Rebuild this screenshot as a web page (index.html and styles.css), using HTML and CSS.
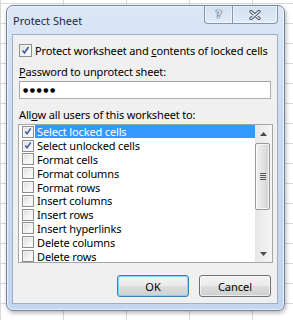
FILE: index.html
```html
<!DOCTYPE html>
<html lang="en">
<head>
  <meta charset="UTF-8">
  <meta name="viewport" content="width=device-width, initial-scale=1">
  <title>Protect Sheet</title>

  <link rel="stylesheet" href="styles.css">
</head>

<body>

  <div class="dialog">
    <div class="titlebar">
      <span class="title">Protect Sheet</span>
      <div class="caption-btns">
        <span class="cap-btn help">?</span>
        <span class="cap-btn close">
          <svg width="12" height="10" viewBox="0 0 12 10">
            <path d="M2 1.5 L10 8.5 M10 1.5 L2 8.5" stroke="#3d4b60" stroke-width="3.2" stroke-linecap="round"/>
            <path d="M2 1.5 L10 8.5 M10 1.5 L2 8.5" stroke="#f4f6f9" stroke-width="1.4" stroke-linecap="round"/>
          </svg>
        </span>
      </div>
    </div>

    <div class="panel">
      <div class="check-row">
        <span class="cb"><svg width="11" height="11" viewBox="0 0 11 11"><path d="M2.5 5.5 L4.5 8 L8.5 2" fill="none" stroke="#3a5a9c" stroke-width="1.6"/></svg></span>
        <span>Protect worksheet and <u>c</u>ontents of locked cells</span>
      </div>

      <div class="field-label"><u>P</u>assword to unprotect sheet:</div>
      <div class="password">●●●●●</div>

      <div class="field-label">All<u>o</u>w all users of this worksheet to:</div>

      <div class="listbox">
        <ul class="items">
          <li class="item">
            <span class="cb"><svg width="11" height="11" viewBox="0 0 11 11"><path d="M2.5 5.5 L4.5 8 L8.5 2" fill="none" stroke="#3a5a9c" stroke-width="1.6"/></svg></span>
            <span class="item-text selected">Select locked cells</span>
          </li>
          <li class="item">
            <span class="cb"><svg width="11" height="11" viewBox="0 0 11 11"><path d="M2.5 5.5 L4.5 8 L8.5 2" fill="none" stroke="#3a5a9c" stroke-width="1.6"/></svg></span>
            <span class="item-text">Select unlocked cells</span>
          </li>
          <li class="item"><span class="cb"></span><span class="item-text">Format cells</span></li>
          <li class="item"><span class="cb"></span><span class="item-text">Format columns</span></li>
          <li class="item"><span class="cb"></span><span class="item-text">Format rows</span></li>
          <li class="item"><span class="cb"></span><span class="item-text">Insert columns</span></li>
          <li class="item"><span class="cb"></span><span class="item-text">Insert rows</span></li>
          <li class="item"><span class="cb"></span><span class="item-text">Insert hyperlinks</span></li>
          <li class="item"><span class="cb"></span><span class="item-text">Delete columns</span></li>
          <li class="item"><span class="cb"></span><span class="item-text">Delete rows</span></li>
        </ul>
        <div class="scrollbar">
          <div class="arrow"><svg width="7" height="4" viewBox="0 0 7 4"><path d="M3.5 0 L7 4 L0 4 Z" fill="#4a4a4a"/></svg></div>
          <div class="track">
            <div class="thumb">
              <span class="grip"></span>
            </div>
          </div>
          <div class="arrow"><svg width="7" height="4" viewBox="0 0 7 4"><path d="M0 0 L7 0 L3.5 4 Z" fill="#4a4a4a"/></svg></div>
        </div>
      </div>

      <div class="buttons">
        <button class="btn default">OK</button>
        <button class="btn">Cancel</button>
      </div>
    </div>
  </div>

</body>
</html>
```

FILE: styles.css
```css
html {
  background: #fff;
}

body {
  margin: 0;
  min-height: 320px;
  box-sizing: border-box;
  padding: 5px 0 0 6px;
  font-family: "Noto Sans", "Liberation Sans", sans-serif;
  font-size: 11px;
  letter-spacing: -0.15px;
  color: #000;
  background-color: #fff;
  background-image:
    linear-gradient(to right, #d9d9d9 1px, transparent 1px),
    linear-gradient(to bottom, #d9d9d9 1px, transparent 1px);
  background-size: 63px 100%, 100% 20px;
  background-position: 0 0, 0 3px;
}

.dialog {
  width: 279px;
  height: 306px;
  box-sizing: border-box;
  border: 1px solid #72869f;
  border-radius: 7px;
  padding: 0 6px 6px 5px;
  background: linear-gradient(to bottom, #dce7f5 0%, #c9dbf1 40%, #c3d6ef 100%);
  box-shadow: inset 0 0 0 1px rgba(255, 255, 255, 0.55), 1px 2px 4px rgba(0, 0, 0, 0.3);
}

.titlebar {
  height: 28px;
  display: flex;
  justify-content: space-between;
}

.title {
  padding-left: 1px;
  line-height: 29px;
  color: #1e2b3c;
  letter-spacing: 0;
}

.caption-btns {
  display: flex;
  height: 18px;
}

.cap-btn {
  display: flex;
  align-items: center;
  justify-content: center;
  height: 18px;
  box-sizing: border-box;
  border: 1px solid #8396ae;
  border-top: none;
  background: linear-gradient(to bottom, #d3e0f0, #e3ecf7);
  box-shadow: inset 0 0 0 1px rgba(255, 255, 255, 0.5);
}

.help {
  width: 29px;
  border-radius: 0 0 0 4px;
  font-family: "DejaVu Sans", sans-serif;
  font-weight: bold;
  font-size: 11px;
  color: #e9eef5;
  text-shadow: 0 0 1px #33445a, 0 0 1px #33445a, 0 0 1px #33445a;
}

.close {
  width: 45px;
  border-left: none;
  border-radius: 0 0 4px 0;
}

.panel {
  height: 270px;
  box-sizing: border-box;
  border: 1px solid #9db0c8;
  background: #f0f0f0;
  padding: 9px 6px 0 6px;
}

.check-row {
  display: flex;
  align-items: center;
  gap: 3px;
  height: 13px;
}

.cb {
  width: 13px;
  height: 13px;
  flex: none;
  box-sizing: border-box;
  border: 1px solid #8e8f8f;
  background: linear-gradient(135deg, #dcdcdc 0%, #f4f4f4 60%, #ffffff 100%);
  box-shadow: inset 0 0 0 1px #f4f4f4;
  display: flex;
  align-items: center;
  justify-content: center;
}

.field-label {
  line-height: 15px;
  margin-top: 7px;
}

.password {
  height: 18px;
  box-sizing: border-box;
  margin-top: 2px;
  border: 1px solid #abadb3;
  border-top-color: #a0a3aa;
  background: #fff;
  padding-left: 3px;
  font-family: "DejaVu Sans", sans-serif;
  font-size: 6px;
  letter-spacing: 1.5px;
  line-height: 16px;
}

.password + .field-label {
  margin-top: 8px;
}

.listbox {
  display: flex;
  width: 255px;
  height: 139px;
  box-sizing: border-box;
  margin: 2px 0 0 -1px;
  border: 1px solid #a6a6a6;
  background: #fff;
}

.items {
  list-style: none;
  margin: 0;
  padding: 0 0 0 3px;
  flex: 1;
}

.item {
  display: flex;
  align-items: center;
  height: 13.8px;
}

.item .cb {
  width: 12px;
  height: 12px;
  margin-right: 1px;
}

.item-text {
  flex: 1;
  padding-left: 2px;
  line-height: 13px;
  height: 13px;
}

.selected {
  background: #3399ff;
  color: #fff;
}

.scrollbar {
  width: 17px;
  display: flex;
  flex-direction: column;
  background: linear-gradient(to right, #e7e7e7, #f5f5f5);
}

.arrow {
  height: 17px;
  display: flex;
  align-items: center;
  justify-content: center;
}

.track {
  flex: 1;
}

.thumb {
  width: 15px;
  height: 67px;
  box-sizing: border-box;
  margin-top: 1px;
  border: 1px solid #979797;
  border-radius: 2px;
  background: linear-gradient(to right, #f1f1f1, #e4e4e4 50%, #d3d3d3);
  box-shadow: inset 0 0 0 1px rgba(255, 255, 255, 0.7);
  display: flex;
  align-items: center;
  justify-content: center;
}

.grip {
  width: 6px;
  height: 7px;
  background: repeating-linear-gradient(to bottom, #555 0 1px, transparent 1px 2px);
}

.buttons {
  display: flex;
  justify-content: flex-end;
  gap: 10px;
  margin-top: 12px;
}

.btn {
  width: 72px;
  height: 22px;
  padding: 0;
  border: 1px solid #707070;
  border-radius: 3px;
  background: linear-gradient(to bottom, #f2f2f2 0%, #ebebeb 50%, #dddddd 51%, #cfcfcf 100%);
  box-shadow: inset 0 0 0 1px rgba(255, 255, 255, 0.6);
  font-family: "Noto Sans", "Liberation Sans", sans-serif;
  font-size: 11px;
  color: #000;
  cursor: pointer;
}

.btn.default {
  border-color: #3c7fb1;
  box-shadow: inset 0 0 0 1px #7fd6f5;
}
```
